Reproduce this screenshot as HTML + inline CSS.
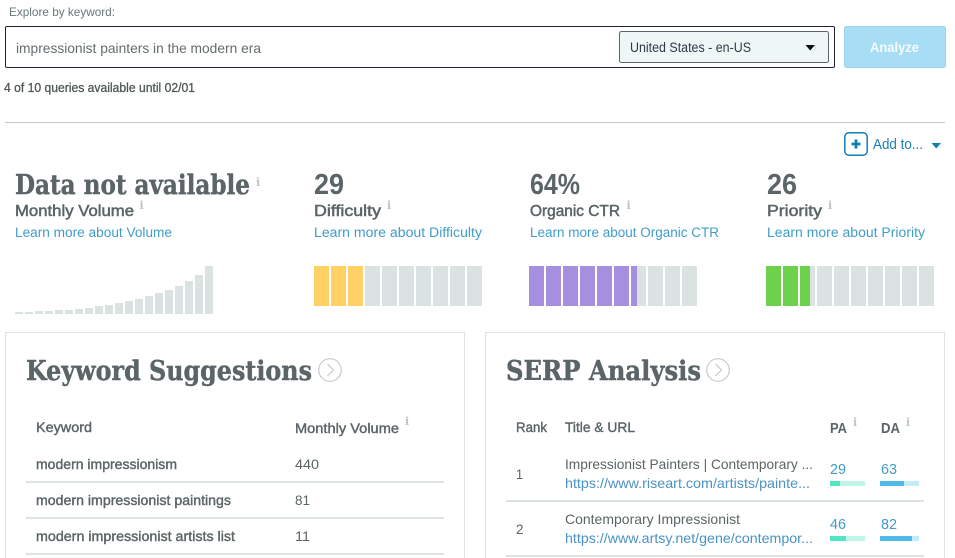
<!DOCTYPE html>
<html lang="en"><head><meta charset="utf-8"><title>Keyword Explorer</title>
<style>
html,body{margin:0;padding:0;background:#fff;width:955px;height:558px;overflow:hidden}
svg{display:block}
text{font-family:"Liberation Sans",sans-serif;fill:#5b6467;font-size:13px}
.s{font-family:"DejaVu Serif",serif;font-weight:700;font-size:27.5px;stroke:#5b6467;stroke-width:.45}
.n{font-weight:700;font-size:28.5px}
.h{font-size:15.5px;stroke:#5b6467;stroke-width:.5}
.l{fill:#3f9dc9;font-size:13.5px}
.i{font-family:"DejaVu Serif",serif;font-weight:700;font-size:11px;fill:#bcc5c4}
.m{stroke:#5b6467;stroke-width:.4}
.u{fill:#4a93c4}
.p{fill:#3f9dc9;font-size:14.5px}
.t{font-size:14px}
</style></head><body>
<svg width="955" height="558" viewBox="0 0 955 558" xmlns="http://www.w3.org/2000/svg">
<text x="9" y="16" style="font-size:12px;fill:#6b7679" textLength="106" lengthAdjust="spacingAndGlyphs">Explore by keyword:</text>
<rect x="5.500" y="26.500" width="829" height="41" rx="1.500" fill="#fff" stroke="#23232f"/>
<text x="16" y="53" style="font-size:14px;fill:#646c6e" textLength="245" lengthAdjust="spacingAndGlyphs">impressionist painters in the modern era</text>
<rect x="619.500" y="31.500" width="209" height="31" rx="2" fill="#eff7f6" stroke="#5b6467"/>
<text x="630" y="52" style="font-size:13.500px;fill:#333848" textLength="121" lengthAdjust="spacingAndGlyphs">United States - en-US</text>
<path d="M805.500 45H815L810.200 50.500Z" fill="#111"/>
<rect x="844.500" y="26.500" width="101" height="41" rx="2" fill="#a7ddf5" stroke="#9ed2ea"/>
<text x="870" y="52" style="font-size:13.500px;font-weight:700;fill:#fff;fill-opacity:.9" textLength="49" lengthAdjust="spacingAndGlyphs">Analyze</text>
<text x="4" y="92" style="font-size:12.500px;fill:#4f5759;stroke:#4f5759;stroke-width:.3" textLength="191" lengthAdjust="spacingAndGlyphs">4 of 10 queries available until 02/01</text>
<rect x="5" y="122" width="940" height="1" fill="#c8c8c8"/>
<rect x="844.800" y="132.800" width="22.400" height="22.400" rx="4" fill="#fff" stroke="#0f7fb5" stroke-width="1.500"/>
<path d="M856 139.500V148.500M851.500 144H860.500" stroke="#0f7fb5" stroke-width="2.800" fill="none"/>
<text x="873" y="149" style="font-size:14.500px;fill:#1a80b8" textLength="50" lengthAdjust="spacingAndGlyphs">Add to...</text>
<path d="M931.500 143H941L936.200 148.500Z" fill="#0f7fb5"/>

<text x="15" y="194" class="s" textLength="235" lengthAdjust="spacingAndGlyphs">Data not available</text>
<text x="256" y="186" class="i">i</text>
<text x="15" y="216" class="h" textLength="119" lengthAdjust="spacingAndGlyphs">Monthly Volume</text>
<text x="139.500" y="209" class="i">i</text>
<text x="15" y="237" class="l" textLength="157" lengthAdjust="spacingAndGlyphs">Learn more about Volume</text>
<g fill="#dbe3e2">
<rect x="15" y="312" width="8" height="2"/><rect x="25" y="312" width="8" height="2"/><rect x="35" y="311" width="8" height="3"/><rect x="45" y="311" width="8" height="3"/><rect x="55" y="310" width="8" height="4"/><rect x="65" y="310" width="8" height="4"/><rect x="75" y="309" width="8" height="5"/><rect x="85" y="308" width="8" height="6"/><rect x="95" y="306" width="8" height="8"/><rect x="105" y="305" width="8" height="9"/><rect x="115" y="303" width="8" height="11"/><rect x="125" y="301" width="8" height="13"/><rect x="135" y="299" width="8" height="15"/><rect x="145" y="296" width="8" height="18"/><rect x="155" y="293" width="8" height="21"/><rect x="165" y="290" width="8" height="24"/><rect x="175" y="286" width="8" height="28"/><rect x="185" y="281" width="8" height="33"/><rect x="195" y="275" width="8" height="39"/><rect x="205" y="266" width="8" height="48"/>
</g>

<text x="314" y="194" class="n" textLength="30" lengthAdjust="spacingAndGlyphs">29</text>
<text x="314" y="216" class="h" textLength="67" lengthAdjust="spacingAndGlyphs">Difficulty</text>
<text x="387" y="209" class="i">i</text>
<text x="314" y="237" class="l" textLength="168" lengthAdjust="spacingAndGlyphs">Learn more about Difficulty</text>
<g fill="#dbe3e2">
<rect x="365" y="266" width="15" height="40"/><rect x="382" y="266" width="15" height="40"/><rect x="399" y="266" width="15" height="40"/><rect x="416" y="266" width="15" height="40"/><rect x="433" y="266" width="15" height="40"/><rect x="450" y="266" width="15" height="40"/><rect x="467" y="266" width="15" height="40"/>
</g>
<g fill="#ffd166"><rect x="314" y="266" width="15" height="40"/><rect x="331" y="266" width="15" height="40"/><rect x="348" y="266" width="15" height="40"/></g>

<text x="530" y="194" class="n" textLength="50" lengthAdjust="spacingAndGlyphs">64%</text>
<text x="530" y="216" class="h" textLength="90" lengthAdjust="spacingAndGlyphs">Organic CTR</text>
<text x="626.500" y="209" class="i">i</text>
<text x="530" y="237" class="l" textLength="189" lengthAdjust="spacingAndGlyphs">Learn more about Organic CTR</text>
<g fill="#dbe3e2">
<rect x="631" y="266" width="15" height="40"/><rect x="648" y="266" width="15" height="40"/><rect x="665" y="266" width="15" height="40"/><rect x="682" y="266" width="15" height="40"/>
</g>
<g fill="#a78fdf">
<rect x="529" y="266" width="15" height="40"/><rect x="546" y="266" width="15" height="40"/><rect x="563" y="266" width="15" height="40"/><rect x="580" y="266" width="15" height="40"/><rect x="597" y="266" width="15" height="40"/><rect x="614" y="266" width="15" height="40"/><rect x="631" y="266" width="6" height="40"/>
</g>

<text x="767" y="194" class="n" textLength="30" lengthAdjust="spacingAndGlyphs">26</text>
<text x="767" y="216" class="h" textLength="55" lengthAdjust="spacingAndGlyphs">Priority</text>
<text x="828" y="209" class="i">i</text>
<text x="767" y="237" class="l" textLength="158" lengthAdjust="spacingAndGlyphs">Learn more about Priority</text>
<g fill="#dbe3e2">
<rect x="800" y="266" width="15" height="40"/><rect x="817" y="266" width="15" height="40"/><rect x="834" y="266" width="15" height="40"/><rect x="851" y="266" width="15" height="40"/><rect x="868" y="266" width="15" height="40"/><rect x="885" y="266" width="15" height="40"/><rect x="902" y="266" width="15" height="40"/><rect x="919" y="266" width="15" height="40"/>
</g>
<g fill="#6ed14c"><rect x="766" y="266" width="15" height="40"/><rect x="783" y="266" width="15" height="40"/><rect x="800" y="266" width="10" height="40"/></g>

<path d="M5.500 560V332.500H464.500V560" fill="none" stroke="#dce5e4"/>
<path d="M485.500 560V332.500H944.500V560" fill="none" stroke="#dce5e4"/>

<text x="26" y="380" class="s" textLength="286" lengthAdjust="spacingAndGlyphs">Keyword Suggestions</text>
<circle cx="330" cy="370" r="11.300" fill="none" stroke="#c3cccb" stroke-width="1.200"/>
<path d="M327.500 364L333.500 370L327.500 376" fill="none" stroke="#c3cccb" stroke-width="1.200"/>
<text x="36" y="432" class="m t" textLength="56" lengthAdjust="spacingAndGlyphs">Keyword</text>
<text x="295" y="433" class="m t" textLength="104" lengthAdjust="spacingAndGlyphs">Monthly Volume</text>
<text x="405" y="425" class="i">i</text>
<text x="36" y="469" class="m t" textLength="141" lengthAdjust="spacingAndGlyphs">modern impressionism</text>
<text x="295" y="469" class="t" textLength="24" lengthAdjust="spacingAndGlyphs">440</text>
<rect x="26" y="481" width="418" height="2" fill="#dce3e2"/>
<text x="36" y="505" class="m t" textLength="195" lengthAdjust="spacingAndGlyphs">modern impressionist paintings</text>
<text x="295" y="505" class="t" textLength="15" lengthAdjust="spacingAndGlyphs">81</text>
<rect x="26" y="517" width="418" height="2" fill="#dce3e2"/>
<text x="36" y="541" class="m t" textLength="199" lengthAdjust="spacingAndGlyphs">modern impressionist artists list</text>
<text x="295" y="541" class="t" textLength="15" lengthAdjust="spacingAndGlyphs">11</text>
<rect x="26" y="553" width="418" height="2" fill="#dce3e2"/>

<text x="506" y="380" class="s" textLength="195" lengthAdjust="spacingAndGlyphs">SERP Analysis</text>
<circle cx="718" cy="370" r="11.300" fill="none" stroke="#c3cccb" stroke-width="1.200"/>
<path d="M715.500 364L721.500 370L715.500 376" fill="none" stroke="#c3cccb" stroke-width="1.200"/>
<text x="516" y="432" class="m t" textLength="31" lengthAdjust="spacingAndGlyphs">Rank</text>
<text x="565" y="432" class="m t" textLength="70" lengthAdjust="spacingAndGlyphs">Title &amp; URL</text>
<text x="830" y="433" style="font-size:14.500px;font-weight:700" textLength="17" lengthAdjust="spacingAndGlyphs">PA</text>
<text x="853" y="426" class="i">i</text>
<text x="881" y="433" style="font-size:14.500px;font-weight:700" textLength="19" lengthAdjust="spacingAndGlyphs">DA</text>
<text x="906" y="426" class="i">i</text>

<text x="516" y="479" class="t" textLength="7" lengthAdjust="spacingAndGlyphs">1</text>
<text x="565" y="469" class="t" textLength="248" lengthAdjust="spacingAndGlyphs">Impressionist Painters | Contemporary ...</text>
<text x="565" y="488" class="u t" textLength="245" lengthAdjust="spacingAndGlyphs">https://www.riseart.com/artists/painte...</text>
<text x="830" y="474" class="p" textLength="16" lengthAdjust="spacingAndGlyphs">29</text>
<rect x="830" y="481" width="35" height="5" fill="#bff6e8"/><rect x="830" y="481" width="10" height="5" fill="#52e5c4"/>
<text x="881" y="474" class="p" textLength="16" lengthAdjust="spacingAndGlyphs">63</text>
<rect x="880" y="481" width="39" height="5" fill="#c4ebfa"/><rect x="880" y="481" width="24" height="5" fill="#4ebae8"/>
<rect x="506" y="500" width="418" height="2" fill="#dce3e2"/>

<text x="516" y="534" class="t" textLength="7.500" lengthAdjust="spacingAndGlyphs">2</text>
<text x="565" y="524" class="t" textLength="175" lengthAdjust="spacingAndGlyphs">Contemporary Impressionist</text>
<text x="565" y="543" class="u t" textLength="248" lengthAdjust="spacingAndGlyphs">https://www.artsy.net/gene/contempor...</text>
<text x="830" y="529" class="p" textLength="16" lengthAdjust="spacingAndGlyphs">46</text>
<rect x="830" y="536" width="35" height="5" fill="#bff6e8"/><rect x="830" y="536" width="16" height="5" fill="#52e5c4"/>
<text x="881" y="529" class="p" textLength="16" lengthAdjust="spacingAndGlyphs">82</text>
<rect x="880" y="536" width="39" height="5" fill="#c4ebfa"/><rect x="880" y="536" width="32" height="5" fill="#4ebae8"/>
<rect x="506" y="555" width="418" height="2" fill="#dce3e2"/>
</svg>
</body></html>
